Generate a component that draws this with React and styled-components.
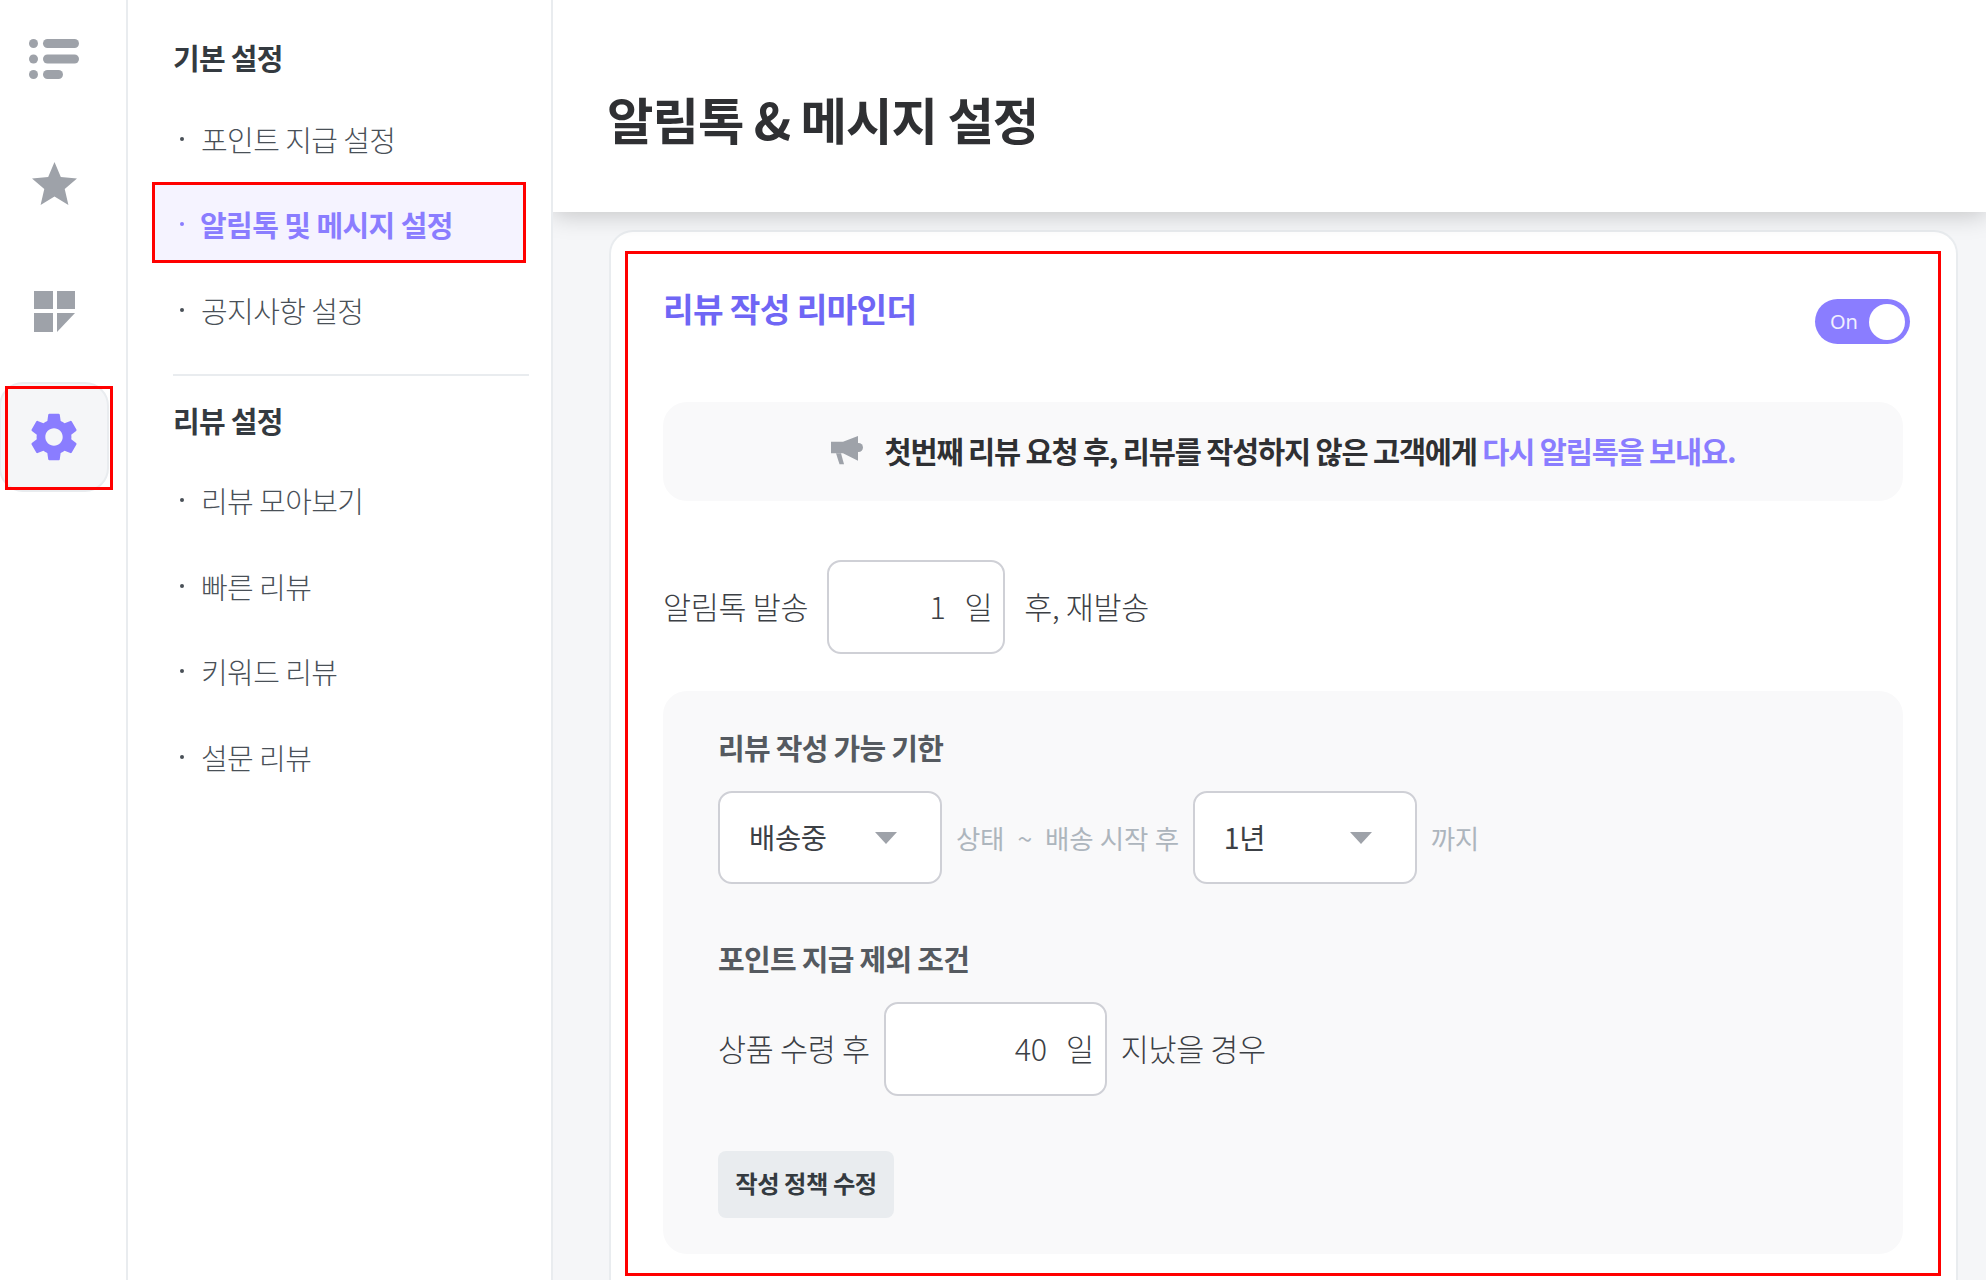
import React from 'react';
import styled, { createGlobalStyle } from 'styled-components';

const Global = createGlobalStyle`
  html, body { margin: 0; padding: 0; background: #fff; }
  body { font-family: "Noto Sans CJK KR", "Noto Sans", sans-serif; color: #343a40; }
  *, *::before, *::after { box-sizing: border-box; }
`;

const Page = styled.div`
  display: flex;
  width: 1986px;
  height: 1280px;
  overflow: hidden;
  background: #fff;
`;

const Rail = styled.nav`
  flex: 0 0 128px;
  display: flex;
  flex-direction: column;
  gap: 16px;
  padding-top: 4px;
  border-right: 2px solid #e9ecef;
`;

const RailItem = styled.div`
  position: relative;
  margin-left: -1px;
  width: 110px;
  height: 110px;
  display: flex;
  align-items: center;
  justify-content: center;
  border-radius: 24px;
  color: ${p => (p.$active ? '#8a7dff' : '#9ea2a9')};
  background: ${p => (p.$active ? '#f5f6f8' : 'transparent')};
  border: 2px solid ${p => (p.$active ? '#e9ecef' : 'transparent')};
  ${p => p.$active && `
    &::after {
      content: '';
      position: absolute;
      left: 4px;
      top: 2px;
      width: 108px;
      height: 104px;
      border: 3px solid #f00;
    }
  `}
`;

const Nav = styled.aside`
  position: relative;
  z-index: 3;
  flex: 0 0 425px;
  padding: 18px 22px 0 45px;
  background: #fff;
  border-right: 2px solid #e9ecef;
`;

const NavHeading = styled.h2`
  margin: 0;
  height: ${p => p.$h}px;
  display: flex;
  align-items: center;
  font-size: 29px;
  font-weight: 700;
  letter-spacing: -0.025em;
  color: #343a40;
`;

const NavList = styled.ul`
  margin: 0;
  padding: 0;
  list-style: none;
`;

const NavItem = styled.li`
  position: relative;
  height: 85.5px;
  display: flex;
  align-items: center;
  gap: ${p => (p.$active ? 16 : 17)}px;
  padding-left: 7px;
  font-size: 29px;
  font-weight: ${p => (p.$active ? 700 : 300)};
  letter-spacing: -0.02em;
  color: ${p => (p.$active ? '#8a7dff' : '#495057')};
  ${p => p.$active && `
    &::before {
      content: '';
      position: absolute;
      left: -21px;
      top: 0;
      width: 374px;
      height: 81px;
      background: #f5f3ff;
      border: 3px solid #f00;
    }
  `}
`;

const Dot = styled.i`
  position: relative;
  flex: 0 0 4px;
  width: 4px;
  height: 4px;
  border-radius: 50%;
  background: currentColor;
`;

const NavLabel = styled.span`
  position: relative;
`;

const NavDivider = styled.hr`
  margin: 21px 0 6px;
  height: 2px;
  border: 0;
  background: #e9ecef;
`;

const Main = styled.main`
  flex: 1;
  min-width: 0;
  display: flex;
  flex-direction: column;
  background: #f5f6f8;
`;

const Header = styled.header`
  position: relative;
  z-index: 2;
  flex: 0 0 212px;
  display: flex;
  align-items: center;
  padding: 24px 0 0 54px;
  background: #fff;
  box-shadow: 0 2px 24px rgba(0, 0, 0, 0.22);
`;

const Title = styled.h1`
  margin: 0;
  font-size: 50.5px;
  font-weight: 700;
  letter-spacing: -0.02em;
  color: #2f3033;
`;

const Card = styled.section`
  margin: 18px 28px 0 56px;
  padding: 19px 15px 0 14px;
  flex: 1;
  background: #fff;
  border: 2px solid #e9ecef;
  border-bottom: 0;
  border-radius: 24px 24px 0 0;
`;

const Highlight = styled.div`
  height: 1025px;
  padding: 0 35px 0 35px;
  border: 3px solid #f00;
`;

const CardHead = styled.div`
  height: 148px;
  display: flex;
  justify-content: space-between;
  align-items: flex-start;
`;

const CardTitle = styled.h3`
  margin: 31px 0 0;
  font-size: 33.3px;
  line-height: 46px;
  font-weight: 700;
  letter-spacing: -0.02em;
  color: #6f66f5;
`;

const Toggle = styled.div`
  margin: 45px -7px 0 0;
  width: 95px;
  height: 45px;
  display: flex;
  align-items: center;
  justify-content: space-between;
  padding: 0 5px 0 15px;
  border-radius: 23px;
  background: #8a7dff;
  color: #f1efff;
  font-size: 20px;
  font-family: "Noto Sans", sans-serif;
`;

const Knob = styled.span`
  width: 36px;
  height: 36px;
  border-radius: 50%;
  background: #fff;
`;

const Banner = styled.div`
  height: 99px;
  padding-bottom: 3px;
  display: flex;
  align-items: center;
  justify-content: center;
  gap: 22px;
  background: #f9f9fa;
  border-radius: 24px;
  font-size: 29.5px;
  font-weight: 600;
  letter-spacing: -0.04em;
  color: #2f3033;
`;

const Accent = styled.span`
  color: #8a7dff;
`;

const Row = styled.div`
  display: flex;
  align-items: center;
  gap: ${p => p.$gap || 14}px;
  font-size: 30.5px;
  font-weight: 300;
  letter-spacing: -0.01em;
  color: #3c4045;
`;

const SendRow = styled(Row)`
  margin-top: 59px;
`;

const NumberBox = styled.div`
  width: ${p => p.$w}px;
  height: 94px;
  padding: 0 11px 3px 0;
  display: flex;
  align-items: center;
  justify-content: flex-end;
  gap: 19px;
  background: #fff;
  border: 2px solid #cfd0d6;
  border-radius: 14px;
`;

const RowText = styled.span`
  padding-bottom: 3px;
`;

const Panel = styled.div`
  margin-top: 37px;
  padding: 38px 54px 36px 55px;
  background: #f9f9fa;
  border-radius: 24px;
`;

const PanelHeading = styled.h4`
  margin: ${p => p.$top || 0}px 0 26px;
  font-size: 29px;
  line-height: 36px;
  font-weight: 700;
  letter-spacing: -0.025em;
  color: #555a60;
`;

const SelectBox = styled.div`
  width: 224px;
  height: 93px;
  padding: 0 43px 3px 29px;
  display: flex;
  align-items: center;
  justify-content: space-between;
  background: #fff;
  border: 2px solid #cfd0d6;
  border-radius: 14px;
  font-size: 28.5px;
  font-weight: 400;
  color: #3c4045;
`;

const Caret = styled.i`
  margin-top: 3px;
  width: 0;
  height: 0;
  border-left: 11.5px solid transparent;
  border-right: 11.5px solid transparent;
  border-top: 12px solid #9ea2a9;
`;

const Muted = styled.span`
  font-size: 26.5px;
  font-weight: 400;
  word-spacing: 1px;
  color: #adb5bd;
  white-space: pre;
`;

const EditButton = styled.button`
  display: block;
  margin-top: 55px;
  width: 176px;
  height: 67px;
  padding: 0 0 4px;
  border: 0;
  border-radius: 8px;
  background: #e9ecef;
  font: 700 24.3px "Noto Sans CJK KR", sans-serif;
  letter-spacing: -0.02em;
  color: #343a40;
`;

const ListIcon = () => (
  <svg width="50" height="40" viewBox="0 0 50 40" fill="currentColor" aria-hidden="true">
    <circle cx="4.5" cy="4.5" r="4.5" />
    <circle cx="4.5" cy="20" r="4.5" />
    <circle cx="4.5" cy="35.5" r="4.5" />
    <rect x="14" y="0" width="36" height="9" rx="4.5" />
    <rect x="14" y="15.5" width="36" height="9" rx="4.5" />
    <rect x="14" y="31" width="20" height="9" rx="4.5" />
  </svg>
);

const StarSvg = styled.svg`
  margin-bottom: 4px;
`;

const StarIcon = () => (
  <StarSvg width="45" height="43" viewBox="2 2 20 19" fill="currentColor" preserveAspectRatio="none" aria-hidden="true">
    <polygon points="12,17.27 18.18,21 16.54,13.97 22,9.24 14.81,8.63 12,2 9.19,8.63 2,9.24 7.46,13.97 5.82,21" />
  </StarSvg>
);

const GridIcon = () => (
  <svg width="41" height="41" viewBox="0 0 41 41" fill="currentColor" aria-hidden="true">
    <rect x="0" y="0" width="19" height="18" />
    <rect x="23" y="0" width="18" height="18" />
    <rect x="0" y="22" width="19" height="19" />
    <polygon points="23,22 41,22 23,41" />
  </svg>
);

const GearIcon = () => (
  <svg width="58" height="58" viewBox="0 0 24 24" fill="currentColor" aria-hidden="true">
    <path d="M19.14 12.94c.04-.3.06-.61.06-.94 0-.32-.02-.64-.07-.94l2.03-1.58c.18-.14.23-.41.12-.61l-1.92-3.32c-.12-.22-.37-.29-.59-.22l-2.39.96c-.5-.38-1.03-.7-1.62-.94l-.36-2.54c-.04-.24-.24-.41-.48-.41h-3.84c-.24 0-.43.17-.47.41l-.36 2.54c-.59.24-1.13.57-1.62.94l-2.39-.96c-.22-.08-.47 0-.59.22L2.74 8.87c-.12.21-.08.47.12.61l2.03 1.58c-.05.3-.09.63-.09.94s.02.64.07.94l-2.03 1.58c-.18.14-.23.41-.12.61l1.92 3.32c.12.22.37.29.59.22l2.39-.96c.5.38 1.03.7 1.62.94l.36 2.54c.05.24.24.41.48.41h3.84c.24 0 .44-.17.47-.41l.36-2.54c.59-.24 1.13-.56 1.62-.94l2.39.96c.22.08.47 0 .59-.22l1.92-3.32c.12-.22.07-.47-.12-.61l-2.01-1.58zM12 15.6c-1.98 0-3.6-1.62-3.6-3.6s1.62-3.6 3.6-3.6 3.6 1.62 3.6 3.6-1.62 3.6-3.6 3.6z" />
  </svg>
);

const MegaphoneIcon = () => (
  <svg width="32" height="29" viewBox="0 0 32 29" fill="#9ea2a9" aria-hidden="true">
    <polygon points="0,5.7 12,5.7 27,0 27,24.7 12,17.3 0,17.3" />
    <circle cx="27.5" cy="11.5" r="4.5" />
    <polygon points="5,17.3 10,17.3 13,28.3 8.5,28.3" />
  </svg>
);

const basicMenu = [
  { label: '포인트 지급 설정' },
  { label: '알림톡 및 메시지 설정', active: true },
  { label: '공지사항 설정' },
];
const reviewMenu = ['리뷰 모아보기', '빠른 리뷰', '키워드 리뷰', '설문 리뷰'];

export default function App() {
  return (
    <Page>
      <Global />
      <Rail>
        <RailItem><ListIcon /></RailItem>
        <RailItem><StarIcon /></RailItem>
        <RailItem><GridIcon /></RailItem>
        <RailItem $active><GearIcon /></RailItem>
      </Rail>
      <Nav>
        <NavHeading $h={78}>기본 설정</NavHeading>
        <NavList>
          {basicMenu.map(m => (
            <NavItem key={m.label} $active={m.active}>
              <Dot />
              <NavLabel>{m.label}</NavLabel>
            </NavItem>
          ))}
        </NavList>
        <NavDivider />
        <NavHeading $h={76}>리뷰 설정</NavHeading>
        <NavList>
          {reviewMenu.map(m => (
            <NavItem key={m}>
              <Dot />
              <NavLabel>{m}</NavLabel>
            </NavItem>
          ))}
        </NavList>
      </Nav>
      <Main>
        <Header>
          <Title>알림톡 &amp; 메시지 설정</Title>
        </Header>
        <Card>
          <Highlight>
            <CardHead>
              <CardTitle>리뷰 작성 리마인더</CardTitle>
              <Toggle>On<Knob /></Toggle>
            </CardHead>
            <Banner>
              <MegaphoneIcon />
              <span>
                첫번째 리뷰 요청 후, 리뷰를 작성하지 않은 고객에게 <Accent>다시 알림톡을 보내요.</Accent>
              </span>
            </Banner>
            <SendRow $gap={19}>
              <RowText>알림톡 발송</RowText>
              <NumberBox $w={178}><span>1</span><span>일</span></NumberBox>
              <RowText>후, 재발송</RowText>
            </SendRow>
            <Panel>
              <PanelHeading>리뷰 작성 가능 기한</PanelHeading>
              <Row>
                <SelectBox>배송중<Caret /></SelectBox>
                <Muted>{'상태  ~  배송 시작 후'}</Muted>
                <SelectBox>1년<Caret /></SelectBox>
                <Muted>까지</Muted>
              </Row>
              <PanelHeading $top={56}>포인트 지급 제외 조건</PanelHeading>
              <Row>
                <RowText>상품 수령 후</RowText>
                <NumberBox $w={223}><span>40</span><span>일</span></NumberBox>
                <RowText>지났을 경우</RowText>
              </Row>
              <EditButton type="button">작성 정책 수정</EditButton>
            </Panel>
          </Highlight>
        </Card>
      </Main>
    </Page>
  );
}
